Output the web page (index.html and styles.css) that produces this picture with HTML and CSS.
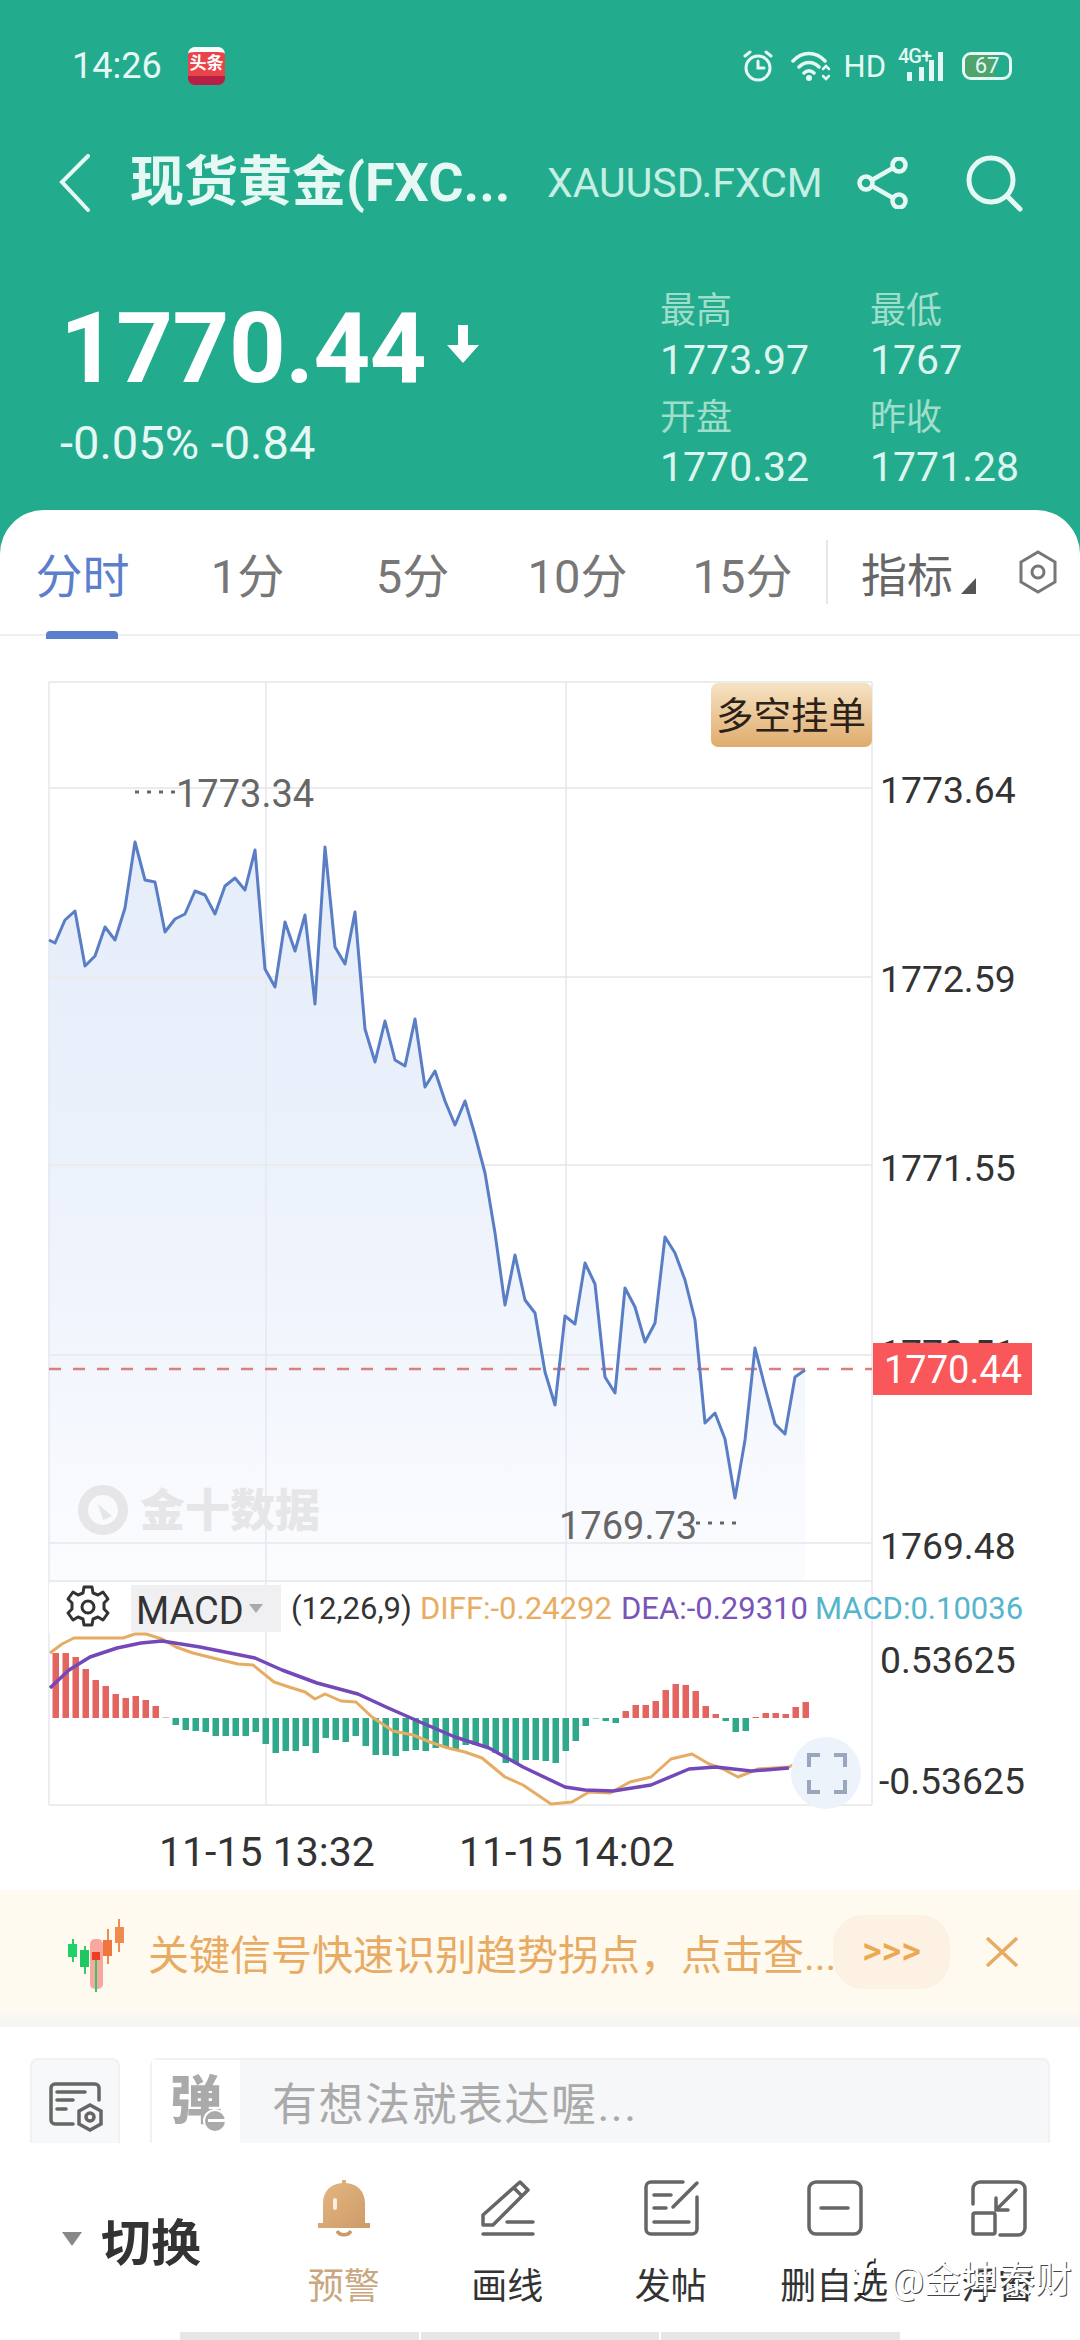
FILE: index.html
```html
<!DOCTYPE html>
<html lang="zh-CN">
<head>
    <meta charset="UTF-8">
    <meta name="viewport" content="width=device-width, initial-scale=1.0">
    <title>现货黄金</title>
    <link rel="stylesheet" href="styles.css">
</head>
<body>
    <header class="hero">
        <div class="status-bar">
            <span class="clock">14:26</span>
            <div class="news-badge"><span class="news-name">头条</span><span class="news-strip"></span></div>
            <div class="status-right">
                <svg class="ico-alarm" width="32" height="32" viewBox="0 0 32 32" fill="none" stroke="#e6f8f3" stroke-width="3" stroke-linecap="round">
                    <circle cx="16" cy="18" r="12"/>
                    <path d="M16 11v7h6M3 6l5-4M29 6l-5-4"/>
                </svg>
                <svg class="ico-wifi" width="42" height="32" viewBox="0 0 42 32" fill="none" stroke="#e6f8f3" stroke-width="3.5" stroke-linecap="round">
                    <path d="M2 11C11 1 25 1 34 11M8 17c6-6 14-6 20 0M13 23c3-3 7-3 10 0"/>
                    <circle cx="18" cy="28" r="3" fill="#e6f8f3" stroke="none"/>
                    <path d="M32 19l3-3 3 3M32 26l3 3 3-3" stroke-width="2.5"/>
                </svg>
                <span class="net-hd">HD</span>
                <div class="signal">
                    <span class="net-4g">4G+</span>
                    <svg width="38" height="32" viewBox="0 0 38 32" fill="#e6f8f3">
                        <rect x="1" y="22" width="5" height="9"/>
                        <rect x="13" y="17" width="5" height="14"/>
                        <rect x="23" y="10" width="5" height="21"/>
                        <rect x="32" y="2" width="5" height="29"/>
                    </svg>
                </div>
                <div class="battery"><span class="battery-fill"></span><span class="battery-num">67</span></div>
            </div>
        </div>

        <nav class="top-nav">
            <svg class="back" width="34" height="58" viewBox="0 0 34 58" fill="none" stroke="#e6f8f3" stroke-width="4" stroke-linecap="round">
                <path d="M30 2L4 28l26 28"/>
            </svg>
            <h1 class="title">现货黄金(FXC...</h1>
            <span class="symbol">XAUUSD.FXCM</span>
            <svg class="share" width="52" height="52" viewBox="0 0 52 52" fill="none" stroke="#e6f8f3" stroke-width="4.5">
                <circle cx="9" cy="26" r="6.5"/>
                <circle cx="42" cy="8" r="6.5"/>
                <circle cx="42" cy="44" r="6.5"/>
                <path d="M15 23l21-12M15 29l21 12"/>
            </svg>
            <svg class="search" width="58" height="58" viewBox="0 0 58 58" fill="none" stroke="#e6f8f3" stroke-width="5" stroke-linecap="round">
                <circle cx="26" cy="26" r="22"/>
                <path d="M42 42l13 13"/>
            </svg>
        </nav>

        <section class="quote">
            <div class="quote-main">
                <div class="price-row">
                    <span class="price">1770.44</span>
                    <svg class="price-arrow" width="34" height="38" viewBox="0 0 34 38" fill="#fff">
                        <path d="M12 0h10v20h11L17 38 1 20h11z"/>
                    </svg>
                </div>
                <div class="change">-0.05% -0.84</div>
            </div>
            <div class="stats">
                <span class="stat-label">最高</span><span class="stat-label">最低</span>
                <span class="stat-value">1773.97</span><span class="stat-value">1767</span>
                <span class="stat-label">开盘</span><span class="stat-label">昨收</span>
                <span class="stat-value">1770.32</span><span class="stat-value">1771.28</span>
            </div>
        </section>
    </header>

    <main class="panel">
        <div class="tabs">
            <a class="tab active">分时</a>
            <a class="tab">1分</a>
            <a class="tab">5分</a>
            <a class="tab">10分</a>
            <a class="tab">15分</a>
            <a class="tab-more">指标<i class="corner"></i></a>
            <svg class="tab-settings" width="42" height="46" viewBox="0 0 42 46" fill="none" stroke="#777" stroke-width="3">
                <path d="M21 3l17 10v20L21 43 4 33V13z"/>
                <circle cx="21" cy="23" r="6"/>
            </svg>
        </div>

        <svg class="chart" width="1080" height="1254" viewBox="0 636 1080 1254">
            <defs>
                <linearGradient id="areaFill" x1="0" y1="0" x2="0" y2="1">
                    <stop offset="0" stop-color="#e5edfa"/>
                    <stop offset="0.55" stop-color="#eef3fc"/>
                    <stop offset="1" stop-color="#fbfcfe"/>
                </linearGradient>
                <linearGradient id="btnFill" x1="0" y1="0" x2="0" y2="1">
                    <stop offset="0" stop-color="#f6e3c4"/>
                    <stop offset="1" stop-color="#e0ab6c"/>
                </linearGradient>
            </defs>

            <path id="priceArea" fill="url(#areaFill)"/>

            <g class="grid">
                <path d="M49 682H872M49 788H872M49 977H872M49 1165H872M49 1355H872M49 1543H872M49 1581H872M49 1805H872"/>
            </g>
            <g class="grid-v">
                <path d="M49 682V1805M266 682V1805M566 682V1805M872 682V1805"/>
            </g>

            <path class="last-line" d="M49 1369H872"/>
            <polyline id="priceLine" class="price-line"/>

            <rect x="711" y="683" width="161" height="64" rx="7" fill="url(#btnFill)"/>
            <text class="btn-text" x="716" y="729">多空挂单</text>

            <text class="axis" x="880" y="803">1773.64</text>
            <text class="axis" x="880" y="992">1772.59</text>
            <text class="axis" x="880" y="1181">1771.55</text>
            <text class="axis" x="880" y="1366">1770.51</text>
            <text class="axis" x="880" y="1559">1769.48</text>

            <rect x="873" y="1343" width="159" height="52" fill="#f9575a"/>
            <text class="axis last-price" x="884" y="1383">1770.44</text>

            <path class="mark-dots" d="M135 792H175"/>
            <text class="mark" x="176" y="807">1773.34</text>
            <text class="mark" x="559" y="1539">1769.73</text>
            <path class="mark-dots" d="M696 1523H737"/>

            <g class="logo-mark">
                <circle cx="103" cy="1510" r="20" fill="none" stroke="#e6e6e9" stroke-width="10"/>
                <path d="M98 1504l14 12-9 4z" fill="#e6e6e9"/>
                <text x="140" y="1527">金十数据</text>
            </g>

            <rect x="49" y="1583" width="82" height="50" fill="#fff"/>
            <g transform="translate(68 1586)" fill="none" stroke="#333" stroke-width="3" stroke-linejoin="round">
                <path d="M16 1h8l1 6 5 2 5-3 5 7-4 4v6l4 4-5 7-5-3-5 2-1 6h-8l-1-6-5-2-5 3-5-7 4-4v-6l-4-4 5-7 5 3 5-2z"/>
                <circle cx="20" cy="21" r="6"/>
            </g>
            <rect x="131" y="1585" width="150" height="47" fill="#f0f0f2"/>
            <text class="macd-name" x="136" y="1624">MACD</text>
            <path d="M249 1604h14l-7 9z" fill="#aaa"/>
            <text class="macd-val" x="291" y="1619">(12,26,9)</text>
            <text class="macd-val diff" x="420" y="1619">DIFF:-0.24292</text>
            <text class="macd-val dea" x="621" y="1619">DEA:-0.29310</text>
            <text class="macd-val macd" x="815" y="1619">MACD:0.10036</text>

            <g id="macdBars"></g>
            <polyline id="diffLine" class="diff-line"/>
            <polyline id="deaLine" class="dea-line"/>

            <text class="axis" x="880" y="1673">0.53625</text>
            <text class="axis" x="879" y="1794">-0.53625</text>

            <ellipse cx="826" cy="1773" rx="35" ry="36" fill="#edf3fb"/>
            <path class="expand" d="M809 1767v-12h11M834 1755h11v12M845 1780v12h-11M820 1792h-11v-12"/>

            <text class="time" x="159" y="1866">11-15 13:32</text>
            <text class="time" x="459" y="1866">11-15 14:02</text>
        </svg>

        <div class="promo">
            <svg class="promo-icon" width="70" height="80" viewBox="0 0 70 80">
                <rect x="30" y="27" width="13" height="50" rx="5" fill="#f7a9a0"/>
                <path d="M13 27v23M25 34v28M36 40v40" stroke="#35c76b" stroke-width="2"/>
                <path d="M48 17v35M59 7v33" stroke="#ee8c4e" stroke-width="2"/>
                <rect x="8" y="32" width="9" height="13" fill="#1fd267"/>
                <rect x="20" y="38" width="9" height="17" fill="#1fc762"/>
                <rect x="32" y="40" width="8" height="8" fill="#ef3d22"/>
                <rect x="43" y="28" width="9" height="16" fill="#f0763f"/>
                <rect x="55" y="15" width="9" height="16" fill="#ee8c4e"/>
            </svg>
            <p class="promo-text">关键信号快速识别趋势拐点，点击查...</p>
            <span class="promo-go">&gt;&gt;&gt;</span>
            <svg class="promo-close" width="34" height="30" viewBox="0 0 34 30" fill="none" stroke="#e7ab63" stroke-width="3.5">
                <path d="M2 1l30 28M32 1L2 29"/>
            </svg>
        </div>
        <div class="promo-edge"></div>

        <div class="comment-row">
            <div class="comment-btn">
                <svg width="60" height="60" viewBox="0 0 60 60" fill="none" stroke="#666" stroke-width="3.5" stroke-linecap="round">
                    <path d="M54 24V12a4 4 0 0 0-4-4H10a4 4 0 0 0-4 4v32a4 4 0 0 0 4 4h18"/>
                    <path d="M12 16h28M12 24h16M12 33h9"/>
                    <path d="M45 29l11 6v13l-11 6-11-6V35z"/>
                    <circle cx="45" cy="41" r="4"/>
                </svg>
            </div>
            <div class="comment-input">
                <div class="danmu"><span class="danmu-char">弹</span><i class="danmu-off"></i></div>
                <span class="placeholder">有想法就表达喔...</span>
            </div>
        </div>

        <div class="action-bar">
            <div class="switcher"><i class="switch-caret"></i><span>切换</span></div>
            <div class="actions">
                <div class="action alert">
                    <svg width="64" height="64" viewBox="0 0 64 64">
                        <defs>
                            <linearGradient id="bellFill" x1="0" y1="0" x2="1" y2="1">
                                <stop offset="0" stop-color="#e6b883"/>
                                <stop offset="1" stop-color="#cc9a66"/>
                            </linearGradient>
                        </defs>
                        <path d="M30 7V4h4v3c12 1 19 9 19 20v20h5v5H6v-5h5V27C11 16 18 8 30 7z" fill="url(#bellFill)"/>
                        <rect x="21" y="22" width="4" height="12" rx="2" fill="#fbeee0"/>
                        <path d="M25 55c3 5 11 5 14 0" fill="none" stroke="#cc9a66" stroke-width="3.5"/>
                    </svg>
                    <span>预警</span>
                </div>
                <div class="action">
                    <svg width="64" height="64" viewBox="0 0 64 64" fill="none" stroke="#666" stroke-width="3.5" stroke-linecap="round" stroke-linejoin="round">
                        <path d="M8 39L45 6l8 8-35 35H8zM39 12l8 8M32 46h26M8 58h50"/>
                    </svg>
                    <span>画线</span>
                </div>
                <div class="action">
                    <svg width="64" height="64" viewBox="0 0 64 64" fill="none" stroke="#666" stroke-width="3.5" stroke-linecap="round">
                        <path d="M44 6H12a5 5 0 0 0-5 5v42a5 5 0 0 0 5 5h41a5 5 0 0 0 5-5V21M34 31L58 7M15 19h17M15 32h12M15 46h35"/>
                    </svg>
                    <span>发帖</span>
                </div>
                <div class="action">
                    <svg width="64" height="64" viewBox="0 0 64 64" fill="none" stroke="#666" stroke-width="3.5" stroke-linecap="round">
                        <rect x="7" y="6" width="52" height="52" rx="7"/>
                        <path d="M19 32h27"/>
                    </svg>
                    <span>删自选</span>
                </div>
                <div class="action">
                    <svg width="64" height="64" viewBox="0 0 64 64" fill="none" stroke="#666" stroke-width="3.5" stroke-linecap="round">
                        <path d="M7 28V13a7 7 0 0 1 7-7h38a7 7 0 0 1 7 7v39a7 7 0 0 1-7 7H34"/>
                        <rect x="7" y="37" width="22" height="21" rx="2"/>
                        <path d="M50 14L30 34M30 22v12h12"/>
                    </svg>
                    <span>浮窗</span>
                </div>
            </div>
            <div class="watermark"><span class="wm-logo">f</span>@金坤泰财</div>
        </div>

        <div class="home-bar"><i></i><i></i><i></i></div>
    </main>

    <script src="script.js"></script>
</body>
</html>
```

FILE: styles.css
```css
* {
    margin: 0;
    padding: 0;
    box-sizing: border-box;
}

body {
    width: 1080px;
    height: 2340px;
    overflow: hidden;
    background: #fff;
    font-family: Roboto, "Noto Sans CJK SC", sans-serif;
    color: #333;
}

/* green header */
.hero {
    background: #23ab8d;
    height: 560px;
    color: #e6f8f3;
}

.status-bar {
    height: 132px;
    display: flex;
    align-items: center;
    padding-left: 72px;
    padding-right: 68px;
}

.clock {
    font-size: 36px;
    width: 116px;
}

.news-badge {
    position: relative;
    width: 37px;
    height: 38px;
    border-radius: 7px;
    background: #e8444a;
    border-top: 5px solid #fff;
    overflow: hidden;
    text-align: center;
}

.news-name {
    display: block;
    font-size: 17px;
    font-weight: 700;
    line-height: 22px;
    color: #fff;
}

.news-strip {
    position: absolute;
    left: 0;
    right: 0;
    bottom: 0;
    height: 9px;
    background: #b81f45;
}

.status-right {
    margin-left: auto;
    display: flex;
    align-items: center;
}

.ico-alarm {
    margin-right: 17px;
}

.net-hd {
    font-size: 31px;
    margin-left: 11px;
    margin-right: 16px;
}

.signal {
    position: relative;
    width: 42px;
    height: 32px;
    margin-right: 18px;
    display: flex;
    justify-content: flex-end;
}

.net-4g {
    position: absolute;
    left: -4px;
    top: -6px;
    font-size: 20px;
    font-weight: 500;
    letter-spacing: -1px;
}

.battery {
    position: relative;
    width: 50px;
    height: 28px;
    border: 3px solid #e6f8f3;
    border-radius: 9px;
    text-align: center;
    overflow: hidden;
}

.battery-fill {
    position: absolute;
    left: 0;
    top: 0;
    bottom: 0;
    width: 67%;
    background: #4fa36c;
}

.battery-num {
    position: relative;
    display: block;
    font-size: 22px;
    line-height: 22px;
}

.top-nav {
    height: 102px;
    display: flex;
    align-items: center;
    padding-left: 58px;
}

.back {
    flex: none;
}

.title {
    width: 417px;
    margin-left: 38px;
    font-size: 54px;
    font-weight: 700;
    line-height: 1.2;
    white-space: nowrap;
}

.symbol {
    width: 310px;
    font-size: 41px;
    color: #c5efe3;
}

.share {
    flex: none;
}

.search {
    flex: none;
    margin-left: 56px;
}

.quote {
    display: flex;
    padding-top: 46px;
    padding-left: 60px;
}

.quote-main {
    width: 606px;
}

.price-row {
    display: flex;
    align-items: center;
    margin-top: 18px;
}

.price {
    font-size: 99px;
    font-weight: 700;
    line-height: 100px;
    color: #fff;
    letter-spacing: -0.5px;
}

.price-arrow {
    margin-left: 20px;
    margin-top: -8px;
}

.change {
    margin-top: 20px;
    font-size: 47px;
    line-height: 50px;
    color: #e6f8f3;
}

.stats {
    display: grid;
    grid-template-columns: 210px 210px;
    grid-auto-rows: 53.5px;
    align-items: center;
}

.stat-label {
    font-size: 36px;
    color: #9fdecb;
}

.stat-value {
    font-size: 41px;
    color: #dcf5ee;
}

/* white panel */
.panel {
    position: relative;
    margin-top: -50px;
    background: #fff;
    border-radius: 44px 44px 0 0;
}

.tabs {
    height: 126px;
    display: flex;
    align-items: center;
    border-bottom: 2px solid #efefef;
}

.tab {
    position: relative;
    width: 165px;
    text-align: center;
    font-size: 47px;
    color: #777;
}

.tab.active {
    color: #5b7fcc;
}

.tab.active::after {
    content: "";
    position: absolute;
    left: 46px;
    bottom: -32px;
    width: 72px;
    height: 8px;
    border-radius: 4px 4px 0 0;
    background: #5b7fcc;
}

.tab-more {
    display: flex;
    align-items: center;
    height: 64px;
    margin-left: 1px;
    padding-left: 33px;
    border-left: 2px solid #e8e8e8;
    font-size: 46px;
    color: #666;
    width: 191px;
}

.corner {
    width: 0;
    height: 0;
    margin-left: 8px;
    margin-top: 28px;
    border-left: 15px solid transparent;
    border-bottom: 16px solid #555;
}

.tab-settings {
    flex: none;
}

/* chart */
.chart {
    display: block;
}

.grid path {
    fill: none;
    stroke: #ececef;
    stroke-width: 2;
}

.grid-v path {
    fill: none;
    stroke: #e5e8f0;
    stroke-width: 1.5;
}

.last-line {
    fill: none;
    stroke: #d97f80;
    stroke-width: 2.5;
    stroke-dasharray: 12 12;
}

.price-line {
    fill: none;
    stroke: #5a7ec6;
    stroke-width: 3;
    stroke-linejoin: round;
}

.btn-text {
    font-size: 37.5px;
    fill: #2a2118;
}

.axis {
    font-size: 37.3px;
    fill: #333;
}

.last-price {
    font-size: 38px;
    fill: #fff;
}

.mark {
    font-size: 38px;
    fill: #666;
}

.mark-dots {
    fill: none;
    stroke: #666;
    stroke-width: 3;
    stroke-dasharray: 4 8;
}

.logo-mark text {
    font-size: 45px;
    font-weight: 900;
    fill: #e6e6e9;
}

.macd-name {
    font-size: 38px;
    fill: #333;
}

.macd-val {
    font-size: 31px;
    fill: #333;
}

.macd-val.diff {
    fill: #e8ad62;
}

.macd-val.dea {
    fill: #7a55b8;
}

.macd-val.macd {
    fill: #55b5cc;
}

.diff-line {
    fill: none;
    stroke: #e6ac63;
    stroke-width: 3;
    stroke-linejoin: round;
}

.dea-line {
    fill: none;
    stroke: #7348b8;
    stroke-width: 3.5;
    stroke-linejoin: round;
}

.expand {
    fill: none;
    stroke: #9aa5c0;
    stroke-width: 4;
}

.time {
    font-size: 41px;
    fill: #333;
}

/* promo banner */
.promo {
    height: 123px;
    display: flex;
    align-items: center;
    padding-left: 60px;
    background: #fffaf0;
}

.promo-icon {
    flex: none;
}

.promo-text {
    width: 685px;
    margin-left: 18px;
    font-size: 41px;
    color: #e8ab63;
    white-space: nowrap;
}

.promo-go {
    width: 117px;
    height: 74px;
    border-radius: 30px;
    background: #fdf1e4;
    color: #eca952;
    font-size: 38px;
    font-weight: 500;
    line-height: 72px;
    text-align: center;
}

.promo-close {
    margin-left: 35px;
}

.promo-edge {
    height: 14px;
    background: linear-gradient(#fbf8f2, #f5f5f5);
}

/* comment row */
.comment-row {
    display: flex;
    gap: 30px;
    margin-top: 31px;
    padding: 0 30px;
    height: 85px;
}

.comment-btn {
    width: 90px;
    display: flex;
    justify-content: center;
    padding-top: 16px;
    background: #f7f8fa;
    border: 2px solid #f1f1f3;
    border-bottom: none;
    border-radius: 8px 8px 0 0;
}

.comment-input {
    flex: 1;
    display: flex;
    align-items: center;
    background: #f6f7f9;
    border: 2px solid #f1f1f3;
    border-bottom: none;
    border-radius: 8px 8px 0 0;
}

.danmu {
    position: relative;
    width: 88px;
    height: 100%;
    background: #fff;
    text-align: center;
    font-weight: 900;
    color: #aaa;
}

.danmu-char {
    font-size: 52px;
    line-height: 84px;
}

.danmu-off {
    position: absolute;
    right: 13px;
    bottom: 10px;
    width: 24px;
    height: 24px;
    border-radius: 50%;
    background: #aaa;
    border: 2px solid #fff;
}

.danmu-off::after {
    content: "";
    position: absolute;
    left: 3px;
    right: 0;
    top: 8px;
    height: 3px;
    background: #fff;
}

.placeholder {
    margin-left: 32px;
    font-size: 45px;
    letter-spacing: 1.5px;
    color: #aaa;
}

/* bottom actions */
.action-bar {
    position: relative;
    height: 189px;
    display: flex;
    background: #fff;
}

.switcher {
    width: 262px;
    display: flex;
    align-items: center;
    padding-left: 62px;
    padding-top: 3px;
    font-size: 50px;
    font-weight: 700;
    color: #333;
}

.switch-caret {
    width: 0;
    height: 0;
    margin-right: 19px;
    border-left: 10px solid transparent;
    border-right: 10px solid transparent;
    border-top: 14px solid #888;
}

.actions {
    flex: 1;
    display: grid;
    grid-template-columns: repeat(5, 163.5px);
    padding-top: 33px;
}

.action {
    display: flex;
    flex-direction: column;
    align-items: center;
    font-size: 36px;
    color: #333;
}

.action span {
    margin-top: 20px;
    line-height: 54px;
}

.action.alert span {
    color: #c9a77f;
}

.watermark {
    position: absolute;
    right: 8px;
    top: 108px;
    font-size: 37px;
    line-height: 52px;
    color: #fff;
    white-space: nowrap;
    text-shadow: 1px 1px 0 #444;
}

.wm-logo {
    margin-right: 20px;
    font-size: 48px;
    font-style: italic;
    font-weight: 700;
    text-shadow: 1.5px 1.5px 0 #222;
}

.home-bar {
    display: flex;
    gap: 2px;
    height: 8px;
    margin: 0 180px;
}

.home-bar i {
    flex: 1;
    background: #e6e6e6;
}
```

FILE: script.js
```js
// price curve, one point per minute (y in chart pixels)
const priceY = [940, 943, 920, 911, 966, 956, 927, 940, 908, 842, 880, 882, 932, 919, 914, 891, 895, 914, 886, 878, 890, 850,
    969, 987, 922, 951, 915, 1004, 847, 947, 964, 912, 1029, 1062, 1021, 1060, 1066, 1019, 1087, 1071, 1101, 1125, 1101,
    1135, 1173, 1233, 1305, 1255, 1300, 1313, 1372, 1405, 1316, 1324, 1263, 1284, 1377, 1393, 1288, 1307, 1342, 1323, 1237,
    1253, 1280, 1320, 1423, 1413, 1439, 1498, 1440, 1348, 1387, 1424, 1434, 1377, 1370];

// histogram heights in pixels, positive goes up
const macdBars = [65, 65, 61, 49, 38, 32, 24, 20, 22, 18, 12, 0.5,
    -7, -12, -13, -14, -18, -18, -18, -18, -14, -26, -35, -33, -33, -28, -35, -20, -22, -24, -18, -28, -37, -37, -38, -33,
    -32, -33, -30, -30, -32, -27, -27, -28, -35, -45, -45, -42, -42, -43, -45, -33, -23, -8, -0.5, -3, -5,
    7, 13, 13, 17, 28, 34, 33, 27, 12, 4, -3, -14, -13, 1, 5, 5, 4, 11, 16];

const diffPoints = '50,1653 62,1644 74,1638 90,1638 107,1638 123,1638 135,1634 146,1634 162,1639 176,1647 193,1653 217,1659 238,1664 253,1665 274,1682 289,1687 305,1692 315,1699 325,1694 341,1701 356,1702 372,1717 393,1731 413,1735 430,1742 448,1748 465,1752 482,1758 505,1777 523,1785 551,1804 572,1802 589,1792 610,1793 630,1782 651,1777 671,1759 692,1754 709,1764 723,1769 738,1777 758,1769 789,1767 802,1760';
const deaPoints = '50,1688 69,1670 90,1657 117,1648 141,1643 162,1641 200,1647 255,1658 282,1670 317,1683 358,1694 386,1707 420,1722 455,1737 489,1748 523,1767 565,1787 585,1790 613,1791 651,1785 689,1769 716,1767 751,1771 789,1768';

function drawPrice() {
    const pts = priceY.map((y, i) => (i === 0 ? 49 : 45 + i * 10) + ',' + y);
    document.getElementById('priceLine').setAttribute('points', pts.join(' '));
    document.getElementById('priceArea').setAttribute('d', 'M49 1580L' + pts.join(' L') + ' L' + (45 + (priceY.length - 1) * 10) + ' 1580Z');
}

function drawMacd() {
    const zero = 1718;
    const group = document.getElementById('macdBars');
    macdBars.forEach((h, i) => {
        const bar = document.createElementNS('http://www.w3.org/2000/svg', 'rect');
        bar.setAttribute('x', 52.5 + i * 10);
        bar.setAttribute('y', h > 0 ? zero - h : zero);
        bar.setAttribute('width', 6.5);
        bar.setAttribute('height', Math.abs(h));
        bar.setAttribute('fill', h > 0 ? '#e4655f' : '#2fa88b');
        group.appendChild(bar);
    });
    document.getElementById('diffLine').setAttribute('points', diffPoints);
    document.getElementById('deaLine').setAttribute('points', deaPoints);
}

drawPrice();
drawMacd();
```
